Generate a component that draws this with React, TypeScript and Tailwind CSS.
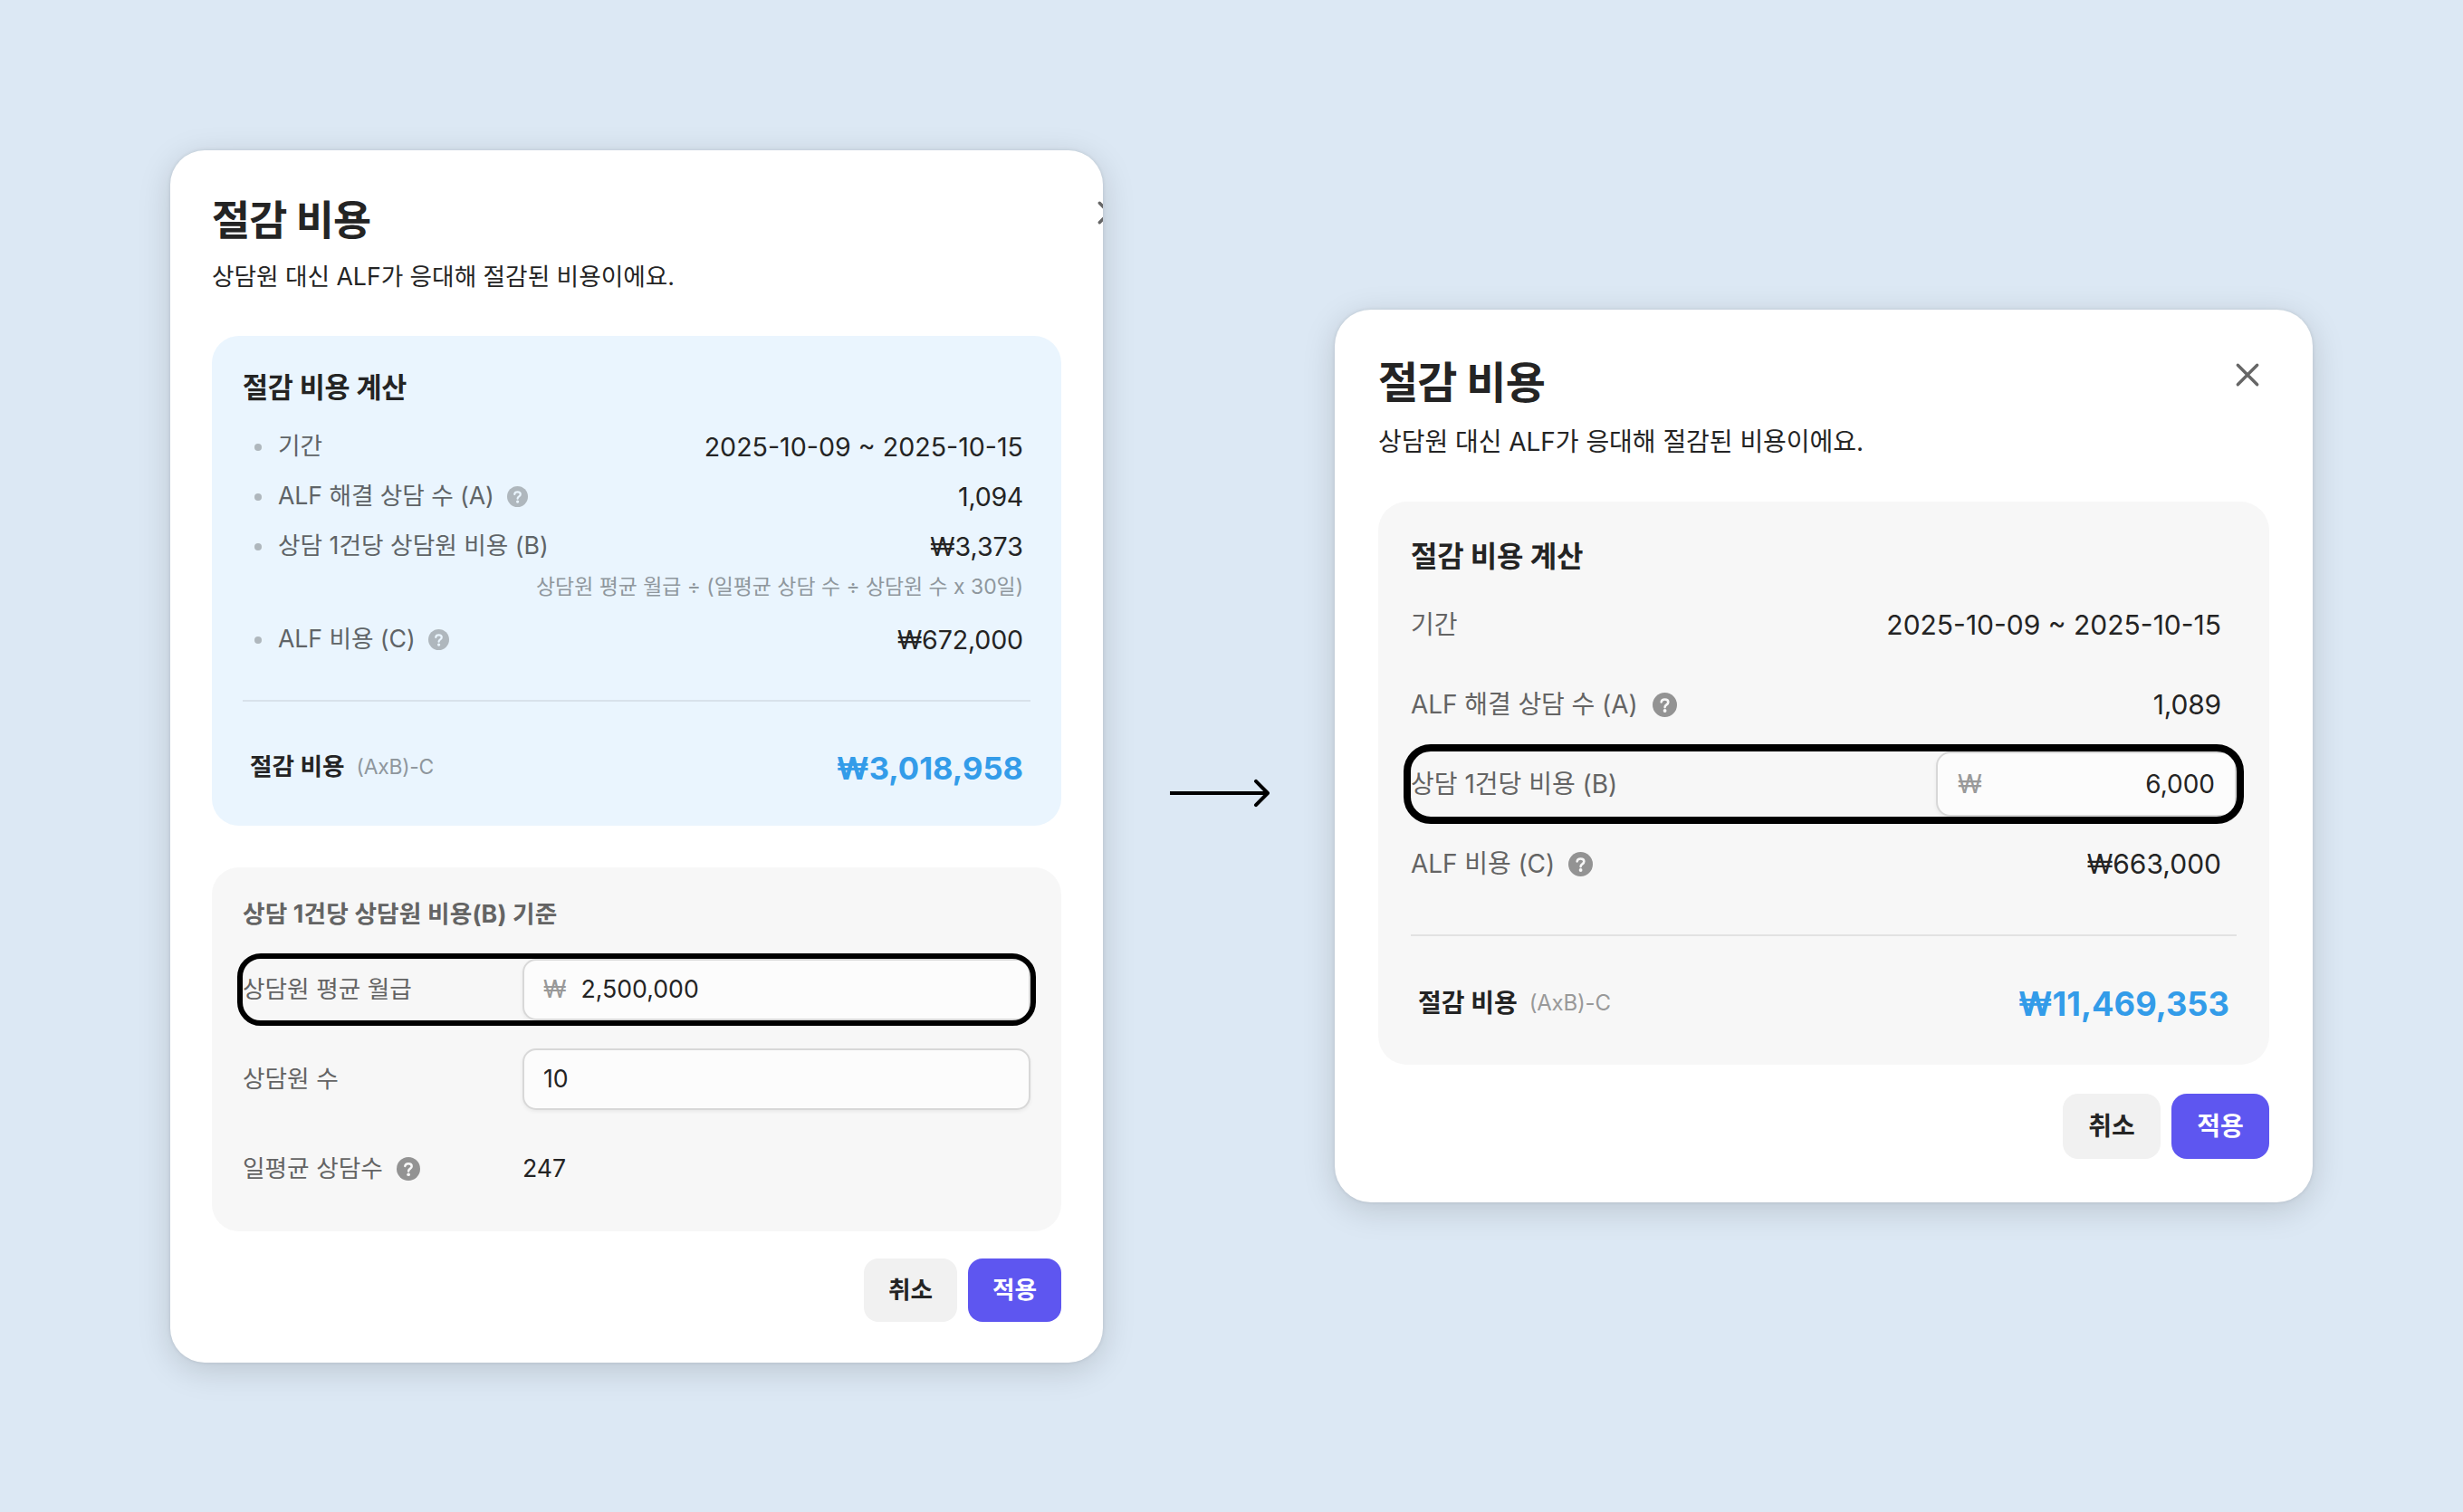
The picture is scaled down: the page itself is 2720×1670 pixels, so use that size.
import React from 'react';

const HelpIcon: React.FC<{ className: string; mark: string }> = ({ className, mark }) => (
    <svg viewBox="0 0 24 24" className={className}>
        <circle cx="12" cy="12" r="12" fill="currentColor" />
        <path
            d="M8.6 9.2c.2-1.6 1.5-2.5 3.4-2.5s3.4 1 3.4 2.7c0 1.3-.8 1.9-1.7 2.5-1.1.7-1.6 1.2-1.6 2.4"
            fill="none"
            stroke={mark}
            strokeWidth="2.3"
            strokeLinecap="round"
        />
        <circle cx="12.1" cy="17.8" r="1.7" fill={mark} />
    </svg>
);

const CloseIcon: React.FC<{ className: string }> = ({ className }) => (
    <svg viewBox="0 0 28 28" className={className}>
        <path d="M3.3 3.3 24.7 24.7M24.7 3.3 3.3 24.7" stroke="currentColor" strokeWidth="3.4" strokeLinecap="round" />
    </svg>
);

const Bullet: React.FC = () => <span className="mr-[18px] ml-[13px] size-2 rounded-full bg-[#afb7bd]" />;

const BeforeCard: React.FC = () => (
    <div className="relative mt-[166px] h-[1339px] w-[1030px] shrink-0 overflow-hidden rounded-[38px] bg-white px-[46px] pt-[51px] shadow-[0_8px_36px_rgba(0,0,0,0.15),0_0_4px_rgba(0,0,0,0.1)]">
        <h1 className="text-[45.8px] leading-[54px] font-bold tracking-[-0.8px]">절감 비용</h1>
        <p className="mt-[16px] text-[26.7px] leading-[36px] tracking-[-0.04px]">상담원 대신 ALF가 응대해 절감된 비용이에요.</p>
        <CloseIcon className="absolute top-[55px] left-[1023px] size-[28px] text-[#666]" />

        <section className="mt-[48px] h-[541px] rounded-[30px] bg-[#eaf5fe] px-[34px] pt-[37px]">
            <h2 className="text-[30.5px] leading-[40px] font-bold tracking-[-0.2px]">절감 비용 계산</h2>
            <div className="mt-[18px] flex h-[55px] items-center pr-2">
                <Bullet />
                <span className="pb-[2px] text-[26.7px] text-[#5f6467]">기간</span>
                <span className="ml-auto pt-px text-[28.6px]">2025-10-09 ~ 2025-10-15</span>
            </div>
            <div className="flex h-[55px] items-center pr-2">
                <Bullet />
                <span className="pb-[2px] text-[26.7px] tracking-[-0.08px] text-[#5f6467]">ALF 해결 상담 수 (A)</span>
                <HelpIcon className="ml-[14px] size-[23px] text-[#afb7bd]" mark="#eaf5fe" />
                <span className="ml-auto pt-px text-[28.6px] tracking-[-0.3px]">1,094</span>
            </div>
            <div className="flex h-[55px] items-center pr-2">
                <Bullet />
                <span className="pb-[2px] text-[26.7px] text-[#5f6467]">상담 1건당 상담원 비용 (B)</span>
                <span className="ml-auto pt-px text-[28.6px]">₩3,373</span>
            </div>
            <p className="pr-2 text-right text-[22.9px] leading-[35px] text-[#8f979d]">
                상담원 평균 월급 ÷ (일평균 상담 수 ÷ 상담원 수 x 30일)
            </p>
            <div className="mt-[13px] flex h-[55px] items-center pr-2">
                <Bullet />
                <span className="pb-[2px] text-[26.7px] tracking-[-0.08px] text-[#5f6467]">ALF 비용 (C)</span>
                <HelpIcon className="ml-[14px] size-[23px] text-[#afb7bd]" mark="#eaf5fe" />
                <span className="ml-auto pt-px text-[28.6px] tracking-[-0.15px]">₩672,000</span>
            </div>
            <div className="mt-[39px] h-[2px] bg-[#d8e2eb]" />
            <div className="mt-[42px] flex h-[60px] items-center px-2">
                <span className="pb-[2px] text-[26.7px] font-bold">절감 비용</span>
                <span className="ml-[13px] text-[22.9px] tracking-[-0.25px] text-[#8f979d]">(AxB)-C</span>
                <span className="ml-auto pt-[3px] text-[34.6px] font-bold text-[#339ce9]">₩3,018,958</span>
            </div>
        </section>

        <section className="mt-[46px] h-[402px] rounded-[30px] bg-[#f7f7f7] px-[34px] pt-[33px]">
            <h2 className="text-[26.7px] leading-[36px] font-bold tracking-[0.15px] text-[#646464]">상담 1건당 상담원 비용(B) 기준</h2>
            <div className="relative mt-[32px] flex h-[68px] items-center">
                <span className="w-[309px] pb-[2px] text-[26.7px] text-[#646464]">상담원 평균 월급</span>
                <div className="flex h-full flex-1 items-center rounded-[15px] border-2 border-[#d8d8d8] bg-[#fcfcfc] px-[21px] pb-[2px] text-[26.7px] shadow-[0_2px_4px_rgba(0,0,0,0.06)]">
                    <span className="text-[#999]">₩</span>
                    <span className="ml-[16px]">2,500,000</span>
                </div>
                <div className="absolute -inset-[6px] rounded-[26px] border-[6px] border-black" />
            </div>
            <div className="mt-[31px] flex h-[68px] items-center">
                <span className="w-[309px] pb-[2px] text-[26.7px] text-[#646464]">상담원 수</span>
                <div className="flex h-full flex-1 items-center rounded-[15px] border-2 border-[#d8d8d8] bg-[#fcfcfc] px-[21px] pb-[2px] text-[26.7px] shadow-[0_2px_4px_rgba(0,0,0,0.06)]">
                    10
                </div>
            </div>
            <div className="mt-[31px] flex h-[68px] items-center">
                <div className="flex w-[309px] items-center">
                    <span className="pb-[2px] text-[26.7px] text-[#646464]">일평균 상담수</span>
                    <HelpIcon className="ml-[15px] size-[26px] text-[#939393]" mark="#f7f7f7" />
                </div>
                <span className="pb-px text-[26.7px]">247</span>
            </div>
        </section>

        <div className="mt-[30px] flex justify-end gap-3">
            <button className="h-[70px] w-[103px] rounded-[16px] bg-[#f1f1f1] pb-[2px] text-[26.7px] font-bold">취소</button>
            <button className="h-[70px] w-[103px] rounded-[16px] bg-[#5e56f0] pb-[2px] text-[26.7px] font-bold text-white">적용</button>
        </div>
    </div>
);

const AfterCard: React.FC = () => (
    <div className="relative mt-[342px] h-[986px] w-[1080px] shrink-0 overflow-hidden rounded-[40px] bg-white px-[48px] pt-[53px] shadow-[0_8px_36px_rgba(0,0,0,0.15),0_0_4px_rgba(0,0,0,0.1)]">
        <h1 className="text-[48px] leading-[56px] font-bold tracking-[-0.8px]">절감 비용</h1>
        <p className="mt-[17px] text-[28px] leading-[40px] tracking-[-0.04px]">상담원 대신 ALF가 응대해 절감된 비용이에요.</p>
        <CloseIcon className="absolute top-[58px] right-[58px] size-[28px] text-[#666]" />

        <section className="mt-[46px] h-[622px] rounded-[32px] bg-[#f7f7f7] px-[36px] pt-[41px]">
            <h2 className="text-[32px] leading-[40px] font-bold tracking-[-0.2px]">절감 비용 계산</h2>
            <div className="mt-[19px] flex flex-col gap-4">
                <div className="flex h-[72px] items-center pr-[17px]">
                    <span className="text-[28px] text-[#646464]">기간</span>
                    <span className="ml-auto text-[30px]">2025-10-09 ~ 2025-10-15</span>
                </div>
                <div className="flex h-[72px] items-center pr-[17px]">
                    <span className="text-[28px] tracking-[-0.08px] text-[#646464]">ALF 해결 상담 수 (A)</span>
                    <HelpIcon className="ml-4 size-[27px] text-[#939393]" mark="#f7f7f7" />
                    <span className="ml-auto text-[30px] tracking-[-0.2px]">1,089</span>
                </div>
                <div className="relative flex h-[72px] items-center">
                    <span className="text-[28px] text-[#646464]">상담 1건당 비용 (B)</span>
                    <div className="ml-auto flex h-full w-[332px] items-center justify-between rounded-[16px] border-2 border-[#d8d8d8] bg-[#fcfcfc] pr-[22px] pl-[22px] text-[28px] shadow-[0_2px_4px_rgba(0,0,0,0.06)]">
                        <span className="text-[#999]">₩</span>
                        <span>6,000</span>
                    </div>
                    <div className="absolute -inset-[8px] rounded-[30px] border-[8px] border-black" />
                </div>
                <div className="flex h-[72px] items-center pr-[17px]">
                    <span className="text-[28px] tracking-[-0.08px] text-[#646464]">ALF 비용 (C)</span>
                    <HelpIcon className="ml-[15px] size-[27px] text-[#939393]" mark="#f7f7f7" />
                    <span className="ml-auto text-[30px]">₩663,000</span>
                </div>
            </div>
            <div className="mt-[42px] h-[2px] bg-[#e2e2e2]" />
            <div className="mt-[44px] flex h-[60px] items-center px-2">
                <span className="text-[28px] font-bold">절감 비용</span>
                <span className="ml-[13px] text-[24px] tracking-[-0.2px] text-[#999]">(AxB)-C</span>
                <span className="ml-auto pt-[2px] text-[36.3px] font-bold text-[#339ce9]">₩11,469,353</span>
            </div>
        </section>

        <div className="mt-8 flex justify-end gap-3">
            <button className="h-[72px] w-[108px] rounded-[17px] bg-[#f1f1f1] text-[28px] font-bold">취소</button>
            <button className="h-[72px] w-[108px] rounded-[17px] bg-[#5e56f0] text-[28px] font-bold text-white">적용</button>
        </div>
    </div>
);

const App: React.FC = () => {
    return (
        <div className="flex h-[1670px] w-[2720px] items-start overflow-hidden bg-[#dce8f4] pl-[188px] font-['Inter','Noto_Sans_CJK_KR',sans-serif] text-[#242424]">
            <BeforeCard />
            <svg viewBox="0 0 110 36" className="mt-[858px] mr-[72px] ml-[74px] h-[36px] w-[110px] shrink-0">
                <path d="M0 18H107" stroke="#000" strokeWidth="4" />
                <path d="M95 4.8 108 18 95 31.2" fill="none" stroke="#000" strokeWidth="4" strokeLinecap="round" strokeLinejoin="round" />
            </svg>
            <AfterCard />
        </div>
    );
};

export default App;
